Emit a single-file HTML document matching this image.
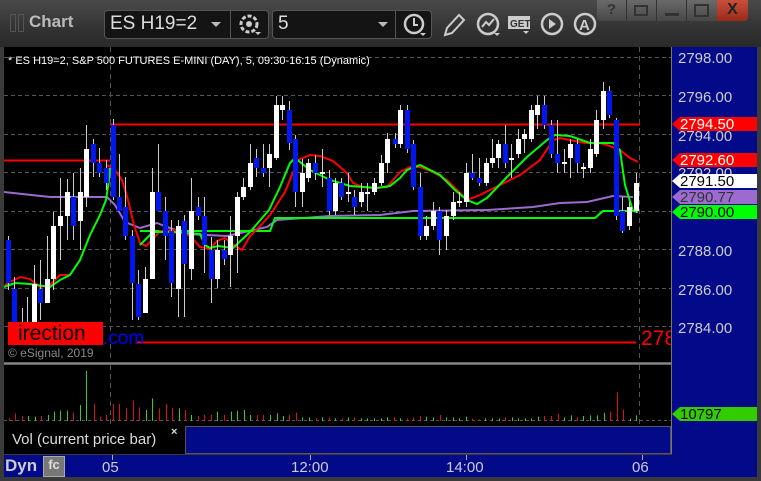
<!DOCTYPE html>
<html><head><meta charset="utf-8"><style>
*{margin:0;padding:0;box-sizing:border-box}
body{width:761px;height:481px;overflow:hidden;background:#2b2b2b;font-family:"Liberation Sans",sans-serif;position:relative}
.abs{position:absolute}
</style></head><body>
<div class="abs" style="left:0;top:0;width:761px;height:47px;background:linear-gradient(#4a4a4a,#333 60%,#2a2a2a)"></div>
<div class="abs" style="left:597px;top:0;width:151px;height:21px;background:linear-gradient(#6a6a6a,#474747);border-radius:0 0 4px 4px"></div>
<div class="abs" style="left:626px;top:0;width:1px;height:21px;background:#333"></div>
<div class="abs" style="left:656px;top:0;width:1px;height:21px;background:#333"></div>
<div class="abs" style="left:686px;top:0;width:1px;height:21px;background:#333"></div>
<div class="abs" style="left:717px;top:0;width:31px;height:21px;background:linear-gradient(#c8503a,#9a2a1a);border-radius:0 0 4px 0"></div>
<div class="abs" style="left:597px;top:1px;width:29px;color:#333;font:bold 15px 'Liberation Sans';text-align:center">?</div>
<div class="abs" style="left:634px;top:5px;width:14px;height:11px;border:2px solid #333"></div>
<div class="abs" style="left:665px;top:13px;width:14px;height:3px;background:#333"></div>
<div class="abs" style="left:694px;top:4px;width:15px;height:13px;border:2px solid #333"></div>
<div class="abs" style="left:717px;top:1px;width:31px;color:#222;font:bold 16px 'Liberation Sans';text-align:center">X</div>
<div class="abs" style="left:10px;top:14px;width:6px;height:18px;border:1px solid #555"></div>
<div class="abs" style="left:18px;top:14px;width:6px;height:18px;border:1px solid #555"></div>
<div class="abs" style="left:29px;top:12px;color:#bbb;font:bold 17px 'Liberation Sans'">Chart</div>
<div class="abs" style="left:104px;top:10px;width:165px;height:29px;background:#141414;border:1px solid #555;border-radius:4px"></div>
<div class="abs" style="left:230px;top:10px;width:1px;height:29px;background:#555"></div>
<div class="abs" style="left:110px;top:13px;color:#ddd;font:19px 'Liberation Sans'">ES H19=2</div>
<div class="abs" style="left:211px;top:22px;width:0;height:0;border:5px solid transparent;border-top:5px solid #bbb"></div>
<svg class="abs" style="left:236px;top:13px" width="28" height="24"><circle cx="13" cy="11" r="8" fill="none" stroke="#ccc" stroke-width="3" stroke-dasharray="4 2"/><circle cx="13" cy="11" r="3" fill="#ccc"/><path d="M19 19l6 0-3 3z" fill="#ccc"/></svg>
<div class="abs" style="left:272px;top:10px;width:160px;height:29px;background:#141414;border:1px solid #555;border-radius:4px"></div>
<div class="abs" style="left:395px;top:10px;width:1px;height:29px;background:#555"></div>
<div class="abs" style="left:278px;top:13px;color:#ddd;font:19px 'Liberation Sans'">5</div>
<div class="abs" style="left:378px;top:22px;width:0;height:0;border:5px solid transparent;border-top:5px solid #bbb"></div>
<svg class="abs" style="left:400px;top:12px" width="30" height="26"><circle cx="14" cy="12" r="9" fill="none" stroke="#ccc" stroke-width="2.5"/><path d="M14 6v7h4" stroke="#ccc" stroke-width="2" fill="none"/><path d="M20 21l6 0-3 3z" fill="#ccc"/></svg>
<svg class="abs" style="left:440px;top:10px" width="160" height="30"><path d="M5 25l2-7 12-13 5 5-12 13z" fill="none" stroke="#ccc" stroke-width="2"/><circle cx="48" cy="14" r="10" fill="none" stroke="#ccc" stroke-width="2.5"/><path d="M42 17l4-5 3 3 5-6" stroke="#ccc" stroke-width="2" fill="none"/><path d="M54 23l6 0-3 3z" fill="#ccc"/><rect x="68" y="6" width="22" height="13" fill="#ccc"/><text x="70" y="17" font-family="Liberation Sans" font-size="10" font-weight="bold" fill="#333">GET</text><path d="M83 21l6 0-3 3z" fill="#ccc"/><circle cx="112" cy="14" r="10" fill="none" stroke="#ccc" stroke-width="2.5"/><path d="M109 9l7 5-7 5z" fill="#ccc"/><circle cx="145" cy="14" r="10" fill="none" stroke="#ccc" stroke-width="2.5"/><text x="139" y="20" font-family="Liberation Sans" font-size="15" font-weight="bold" fill="#ccc">A</text></svg>

<div class="abs" style="left:0;top:47px;width:761px;height:434px;background:#3a3a3a"></div>
<div class="abs" style="left:4px;top:47px;width:668px;height:315px;background:#000"></div>
<div class="abs" style="left:672px;top:47px;width:85px;height:430px;background:#020a8a"></div>
<div class="abs" style="left:671px;top:47px;width:1px;height:407px;background:#777"></div>
<div class="abs" style="left:4px;top:365px;width:667px;height:59px;background:#000"></div>
<div class="abs" style="left:4px;top:424px;width:667px;height:30px;background:#000"></div>
<div class="abs" style="left:185px;top:426px;width:486px;height:28px;background:#020a8a;border:1px solid #555"></div>
<div class="abs" style="left:4px;top:455px;width:753px;height:22px;background:#020a8a"></div>
<svg class="abs" style="left:0;top:0" width="761" height="481" id="s"></svg>
<div class="abs" style="left:8px;top:55px;color:#fff;font:11px 'Liberation Sans'">* ES H19=2, S&amp;P 500 FUTURES E-MINI (DAY), 5, 09:30-16:15 (Dynamic)</div>
<div class="abs" style="left:8px;top:322px;width:95px;height:23px;background:#f00;color:#000;font:21px 'Liberation Sans';line-height:23px;padding-left:10px">irection</div>
<div class="abs" style="left:103px;top:328px;color:#00f;font:19px 'Liberation Sans'">.com</div>
<div class="abs" style="left:8px;top:346px;color:#888;font:12px 'Liberation Sans'">© eSignal, 2019</div>
<div class="abs" style="left:641px;top:327px;color:#f00;font:21px 'Liberation Sans';width:30px;overflow:hidden;white-space:nowrap">2784</div>
<div class="abs" style="left:12px;top:431px;color:#ddd;font:15px 'Liberation Sans'">Vol (current price bar)</div>
<div class="abs" style="left:171px;top:426px;color:#ddd;font:bold 11px 'Liberation Sans'">×</div>
<div class="abs" style="left:5px;top:456px;color:#ccc;font:bold 17px 'Liberation Sans'">Dyn</div>
<div class="abs" style="left:43px;top:456px;width:22px;height:21px;background:#777;border:1px solid #aaa;color:#ddd;font:bold 13px 'Liberation Sans';text-align:center">fc</div>
<div class="abs" style="left:102px;top:459px;color:#ccc;font:15px 'Liberation Sans'">05</div>
<div class="abs" style="left:291px;top:459px;color:#ccc;font:15px 'Liberation Sans'">12:00</div>
<div class="abs" style="left:446px;top:459px;color:#ccc;font:15px 'Liberation Sans'">14:00</div>
<div class="abs" style="left:632px;top:459px;color:#ccc;font:15px 'Liberation Sans'">06</div>
<script>
var s=document.getElementById('s'),h='';
function L(x1,y1,x2,y2,c,w,d){h+='<line x1="'+x1+'" y1="'+y1+'" x2="'+x2+'" y2="'+y2+'" stroke="'+c+'" stroke-width="'+(w||1)+'"'+(d?' stroke-dasharray="'+d+'"':'')+'/>';}
[57,95,134,172,211,249,288,326].forEach(function(y){L(4,y+.5,671,y+.5,'#555',1,'4 3');});
L(110.5,47,110.5,362,'#555',1,'5 4');L(639.5,47,639.5,362,'#555',1,'5 4');
L(110.5,365,110.5,424,'#555',1,'5 4');L(639.5,365,639.5,424,'#555',1,'5 4');
L(4,420.5,671,420.5,'#555',1,'3 3');
L(4,363.5,671,363.5,'#888',2);
L(4,160.5,110,160.5,'#f00',2);L(110,124.5,640,124.5,'#f00',2);L(137,342.5,636,342.5,'#f00',2);
function P(pts,c){h+='<polyline fill="none" stroke="'+c+'" stroke-width="2" points="'+pts+'"/>';}
P('4,192 50,197 107,197 115,205 125,222 140,228 157,223 167,227 187,234 227,236 267,227 277,220 330,216 380,215 413,211 487,210 533,207 560,203 587,202 613,196 633,197','#9b6bd0');
P('140,231 270,231 275,218 595,218 603,211 638,211','#0f0');
P('5,285 12,281 20,277 30,279 40,287 50,285 60,275 70,275','#f00');
P('107,165 115,170 122,180 128,200 134,225 140,243 146,246 152,240 160,231 175,230 190,236 200,247 210,249 217,241 225,238 235,246 242,250 250,236 262,224 270,215 285,192 298,160 310,155 320,156 333,161 347,173 353,183 363,187 373,188 387,187 400,172 410,167 420,167 433,172 447,180 460,193 467,200 480,195 500,185 520,175 540,160 553,140 560,138 570,140 585,143 600,143 610,146 620,150 630,158 638,162','#f00');
P('4,287 15,283 30,284 50,287 60,280 70,275 80,260 90,235 100,215 106,200 109,180 110,168','#0f0');
P('140,245 153,232 170,232 200,234 205,245 210,248 218,246 233,248 250,232 269,210 280,187 290,163 295,158 310,170 330,180 350,186 377,188 390,186 400,178 407,170 420,165 440,175 455,190 467,200 477,204 487,198 507,177 527,157 547,140 555,135 570,136 590,143 613,143 620,150 625,185 633,211 638,212','#0f0');
var C=[[8,240,283,236,290,0],[14,289,327,277,340,0],[22,332,342,308,345,0],[27,322,342,297,345,1],[34,284,322,265,340,1],[40,289,303,260,320,0],[47,279,303,236,303,1],[53,226,279,212,290,1],[60,216,226,178,260,1],[67,192,216,179,240,1],[73,197,226,173,240,0],[80,192,221,168,250,1],[86,149,197,125,207,1],[93,144,163,139,177,0],[99,163,173,148,177,0],[106,168,183,160,190,0],[113,125,197,119,200,0],[119,197,211,154,210,0],[125,207,236,177,240,0],[132,236,283,230,320,0],[138,284,317,270,320,0],[145,279,313,267,313,1],[152,192,279,168,279,1],[158,192,211,144,210,0],[165,211,236,197,260,0],[171,231,283,220,297,0],[178,226,289,220,317,1],[184,221,264,215,317,0],[191,211,269,178,280,1],[198,207,216,197,220,0],[204,216,245,197,273,0],[211,250,279,237,303,0],[217,250,279,240,288,1],[224,250,259,240,265,0],[230,236,255,216,287,1],[237,197,236,192,273,1],[243,187,197,178,200,1],[250,163,187,144,190,1],[256,158,168,149,177,0],[263,168,173,144,177,0],[269,154,168,144,187,1],[276,105,158,96,160,1],[282,105,110,96,120,1],[289,110,143,101,150,0],[295,139,192,135,207,0],[302,173,192,159,207,1],[308,163,178,159,182,1],[315,163,173,155,180,0],[322,172,174,149,187,1],[329,178,211,170,215,0],[335,183,211,178,215,1],[341,183,197,178,200,0],[348,192,194,173,202,1],[354,197,207,190,215,0],[361,192,202,183,207,1],[367,192,194,183,211,1],[374,183,192,178,195,1],[381,163,183,155,186,1],[387,139,163,133,173,1],[395,139,144,133,148,0],[400,110,144,105,148,1],[407,110,149,105,153,0],[413,144,187,140,190,0],[420,187,236,173,240,0],[426,226,236,216,240,1],[433,211,226,202,230,1],[439,211,240,207,255,0],[446,216,236,210,250,1],[453,202,216,192,220,1],[459,201,203,192,207,1],[466,173,202,163,207,1],[472,173,178,154,180,0],[479,178,183,158,186,0],[486,163,183,158,186,1],[492,158,163,139,168,1],[498,144,158,140,168,1],[505,144,163,125,168,0],[511,158,160,144,178,1],[518,139,154,129,158,1],[524,134,139,129,153,1],[531,110,139,105,142,1],[537,105,115,96,129,1],[544,105,125,96,129,0],[551,125,154,120,158,0],[557,154,163,120,173,0],[564,162,164,149,173,1],[570,144,158,139,178,1],[577,144,163,139,173,0],[583,167,169,163,178,1],[590,149,168,139,173,1],[596,120,154,110,157,1],[603,91,120,82,129,1],[609,91,115,86,118,0],[616,120,216,118,220,0],[622,211,231,197,233,0],[629,207,226,202,230,1],[636,183,211,173,213,1]];
C.forEach(function(c){L(c[0]+.5,c[3],c[0]+.5,c[4],'#ccc',1);h+='<rect x="'+(c[0]-2)+'" y="'+c[1]+'" width="5" height="'+Math.max(2,c[2]-c[1])+'" fill="'+(c[5]?'#fff':'#0018ee')+'"/>';});
var V=[[18,325],[31,310],[45,318],[58,318],[72,320],[84,318],[98,315],[111,305],[124,302],[137,302],[151,308],[165,285],[178,183],[193,282],[206,320],[219,315],[233,282],[246,282],[259,295],[273,272],[286,292],[300,300],[314,265],[328,295],[341,282],[354,295],[368,295],[381,300],[394,315],[408,318],[421,315],[435,315],[448,305],[462,315],[475,305],[488,302],[502,300],[515,315],[529,315],[542,315],[556,315],[570,310],[583,318],[596,315],[610,308],[623,322],[636,322],[650,325],[663,322],[677,322],[690,325],[704,325],[717,322],[730,322],[744,325],[757,325],[771,325],[784,325],[797,322],[811,322],[824,325],[838,325],[851,322],[865,318],[878,320],[892,322],[906,315],[919,322],[933,322],[946,325],[960,320],[973,325],[987,328],[1000,325],[1013,325],[1027,325],[1040,322],[1054,322],[1068,325],[1081,325],[1094,325],[1108,320],[1121,318],[1135,318],[1149,312],[1162,322],[1176,316],[1189,322],[1202,318],[1216,316],[1230,316],[1244,308],[1257,305],[1270,248],[1284,298],[1297,326],[1311,316]];
V.forEach(function(v,i){var x=Math.round(v[0]/2.06)+.5,y=310+v[1]/3;var up=i<C.length?C[i][5]:1;L(x,y,x,421,up?'#3c3':'#d11',1);});
function T(y,txt,bg,fg){h+='<polygon points="672,'+(y+7)+' 680,'+y+' 757,'+y+' 757,'+(y+14)+' 680,'+(y+14)+'" fill="'+bg+'"/><text x="680" y="'+(y+12)+'" font-family="Liberation Sans" font-size="15" fill="'+fg+'">'+txt+'</text>';}
h+='<text x="678" y="63" font-family="Liberation Sans" font-size="15" fill="#ccc">2798.00</text><text x="678" y="102" font-family="Liberation Sans" font-size="15" fill="#ccc">2796.00</text><text x="678" y="141" font-family="Liberation Sans" font-size="15" fill="#ccc">2794.00</text><text x="678" y="178" font-family="Liberation Sans" font-size="15" fill="#ccc">2792.00</text><text x="678" y="256" font-family="Liberation Sans" font-size="15" fill="#ccc">2788.00</text><text x="678" y="295" font-family="Liberation Sans" font-size="15" fill="#ccc">2786.00</text><text x="678" y="333" font-family="Liberation Sans" font-size="15" fill="#ccc">2784.00</text>';
T(117,'2794.50','#f00','#fff');T(153,'2792.60','#f00','#fff');T(174,'2791.50','#fff','#000');T(190,'2790.77','#9b6bd0','#333');T(205,'2790.00','#0f0','#000');T(407,'10797','#3c0','#000');
[112,310,466,642].forEach(function(x){L(x+.5,455,x+.5,460,'#aaa',1);});
s.innerHTML=h;
</script>
</body></html>
